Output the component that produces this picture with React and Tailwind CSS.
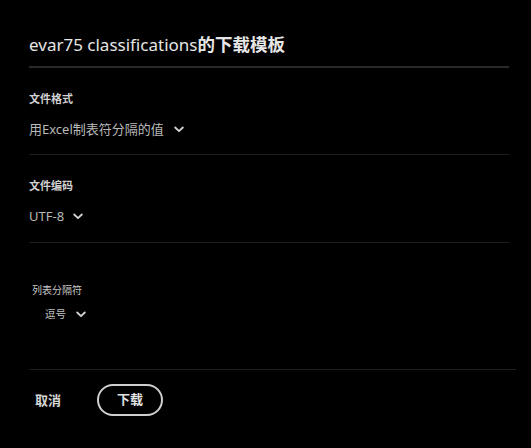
import React from "react";

const Chevron = () => (
  <svg width="10" height="7" viewBox="0 0 10 7" className="shrink-0">
    <path d="M1.2 1.5 L5 5.2 L8.8 1.5" fill="none" stroke="#d4d4d4" strokeWidth="1.8" strokeLinecap="round" strokeLinejoin="round" />
  </svg>
);

const font = { fontFamily: '"Noto Sans", "Noto Sans CJK SC", sans-serif' };

export default function App() {
  return (
    <div className="min-h-[448px] w-full bg-black text-[#d6d6d6]" style={font}>
      <div className="flex flex-col pl-[29px] pr-[22px] pt-[32px]">
        <h1 className="h-6 text-[17px] leading-6 font-normal text-[#e6e6e6] whitespace-nowrap">
          evar75 classifications<span className="text-[17.5px] font-bold">的下载模板</span>
        </h1>
        <div className="mt-[10px] h-[2px] bg-[#2a2a2a]" />

        <div className="mt-[23px] text-[11px] leading-4 font-bold text-[#d2d2d2]">文件格式</div>
        <div className="mt-[12px] flex items-center gap-[10px] h-5 text-[13px] leading-5 text-[#b9b9b9]">
          <span>用Excel制表符分隔的值</span>
          <Chevron />
        </div>
        <div className="mt-[15px] h-px bg-[#1e1e1e]" />

        <div className="mt-[23px] text-[11px] leading-4 font-bold text-[#d2d2d2]">文件编码</div>
        <div className="mt-[12px] flex items-center gap-[9px] h-5 text-[13px] leading-5 text-[#b9b9b9]">
          <span>UTF-8</span>
          <Chevron />
        </div>
        <div className="mt-[16px] h-px bg-[#1e1e1e]" />

        <div className="mt-[40px] pl-[3px] text-[10px] leading-[14px] text-[#c8c8c8]">列表分隔符</div>
        <div className="mt-[9px] pl-[16px] flex items-center gap-[10px] h-4 text-[10.5px] leading-4 text-[#c2c2c2]">
          <span>逗号</span>
          <Chevron />
        </div>
        <div className="mt-[47px] mr-[-7px] h-px bg-[#1e1e1e]" />

        <div className="mt-[14px] flex items-center pl-[6px] gap-[36px]">
          <button className="text-[13px] leading-5 font-bold text-[#d6d6d6]">取消</button>
          <button className="w-[66px] h-[32px] rounded-full border-2 border-[#cfcfcf] text-[13px] font-semibold text-[#e2e2e2] flex items-center justify-center">
            下载
          </button>
        </div>
      </div>
    </div>
  );
}
